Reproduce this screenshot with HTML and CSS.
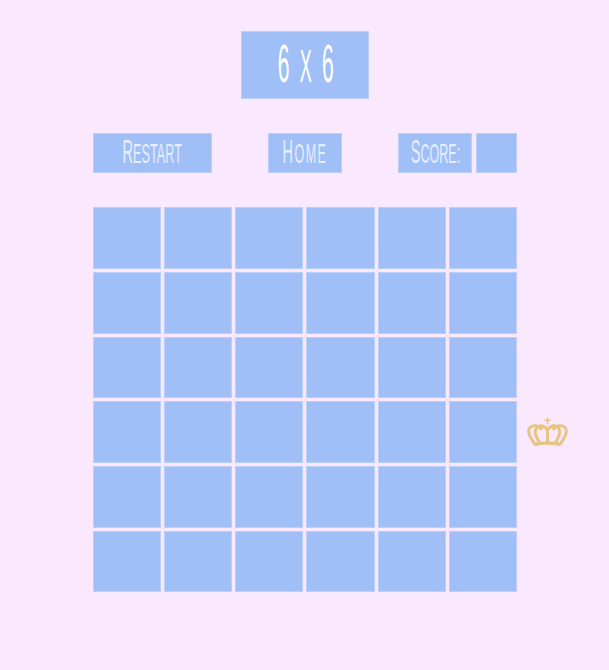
FILE: index.html
```html
<!DOCTYPE html>
<html lang="en">
<head>
<title>Memory game</title>
<meta charset="utf-8">
<link rel="stylesheet" href="styles.css">
</head>
<body>

<div class="game">
	<h1 class="title box"><span>6 <small>x</small> 6</span></h1>

	<div class="controls">
		<a class="btn box restart" href="#"><span>Restart</span></a>
		<a class="btn box home" href="#"><span>Home</span></a>
		<div class="score">
			<div class="btn box score-label"><span>score:</span></div>
			<div class="box score-value"></div>
		</div>
	</div>

	<div class="board-row">
		<div class="board">
			<div class="box"></div><div class="box"></div><div class="box"></div><div class="box"></div><div class="box"></div><div class="box"></div>
			<div class="box"></div><div class="box"></div><div class="box"></div><div class="box"></div><div class="box"></div><div class="box"></div>
			<div class="box"></div><div class="box"></div><div class="box"></div><div class="box"></div><div class="box"></div><div class="box"></div>
			<div class="box"></div><div class="box"></div><div class="box"></div><div class="box"></div><div class="box"></div><div class="box"></div>
			<div class="box"></div><div class="box"></div><div class="box"></div><div class="box"></div><div class="box"></div><div class="box"></div>
			<div class="box"></div><div class="box"></div><div class="box"></div><div class="box"></div><div class="box"></div><div class="box"></div>
		</div>
		<svg class="crown" viewBox="0 0 41 30" width="41" height="30" fill="none" stroke="#e6c583" stroke-width="3">
			<path d="M20.5 0.5v7M17.5 3.2h6" stroke-width="1.5"/>
			<path d="M8 28 C7 25 2 20 1.6 14.5 C1.4 10.5 5 8.2 8.5 8.8 C12 9.4 14 11 15 13"/>
			<path d="M33 28 C34 25 39 20 39.4 14.5 C39.6 10.5 36 8.2 32.5 8.8 C29 9.4 27 11 26 13"/>
			<path d="M13.5 27 C10 22 7.5 17 8.5 13 C9.5 9.5 13 8 15.5 9 C18 10 20.5 12 20.5 14 C20.5 12 23 10 25.5 9 C28 8 31.5 9.5 32.5 13 C33.5 17 31 22 27.5 27"/>
			<path d="M20.5 14v13"/>
			<path d="M7.5 27.5 C15 25.8 26 25.8 33.5 27.5" stroke-width="3.6"/>
		</svg>
	</div>
</div>

</body>
</html>
```

FILE: styles.css
```css
* {
	box-sizing: border-box;
}

body {
	margin: 0;
	padding-left: 1px;
	height: 670px;
	background-color: #fae8ff;
	font-family: "Liberation Sans Narrow", "Liberation Sans", sans-serif;
	color: #fff;
	overflow: hidden;
}

.game {
	width: 424px;
	margin: 0 auto;
	padding-top: 31px;
}

.box {
	background-color: #a0bff7;
	border: 1px solid #bccffa;
}

.title {
	display: flex;
	justify-content: center;
	align-items: center;
	width: 128px;
	height: 68px;
	margin: 0 auto 34px;
	padding: 0 0 4px 3px;
	font-size: 34px;
	font-weight: normal;
	letter-spacing: 3.5px;
	text-transform: uppercase;
}

.title span {
	display: block;
	transform: scale(0.62, 1.6);
}

.title small {
	font-size: 29px;
}

.controls {
	display: flex;
	justify-content: space-between;
	height: 40px;
	margin-bottom: 34.3px;
}

.btn {
	display: flex;
	justify-content: center;
	align-items: center;
	padding-bottom: 2px;
	font-size: 19px;
	text-transform: uppercase;
	color: #e6eeff;
	text-decoration: none;
}

.btn span {
	display: block;
	transform: scale(0.66, 1.5);
}

.btn span::first-letter {
	font-size: 22px;
}

.restart {
	width: 119px;
	letter-spacing: 0.2px;
}

.home {
	width: 74px;
	letter-spacing: 2.2px;
}

.score {
	display: flex;
	gap: 4px;
}

.score-label {
	width: 74px;
}

.score-value {
	width: 41px;
}

.board-row {
	display: flex;
	gap: 10px;
}

.board {
	flex: none;
	display: grid;
	grid-template-columns: repeat(6, 1fr);
	grid-template-rows: repeat(6, 1fr);
	gap: 3px;
	width: 424px;
	height: 385px;
}

.crown {
	flex: none;
	margin-top: 210px;
}
```
